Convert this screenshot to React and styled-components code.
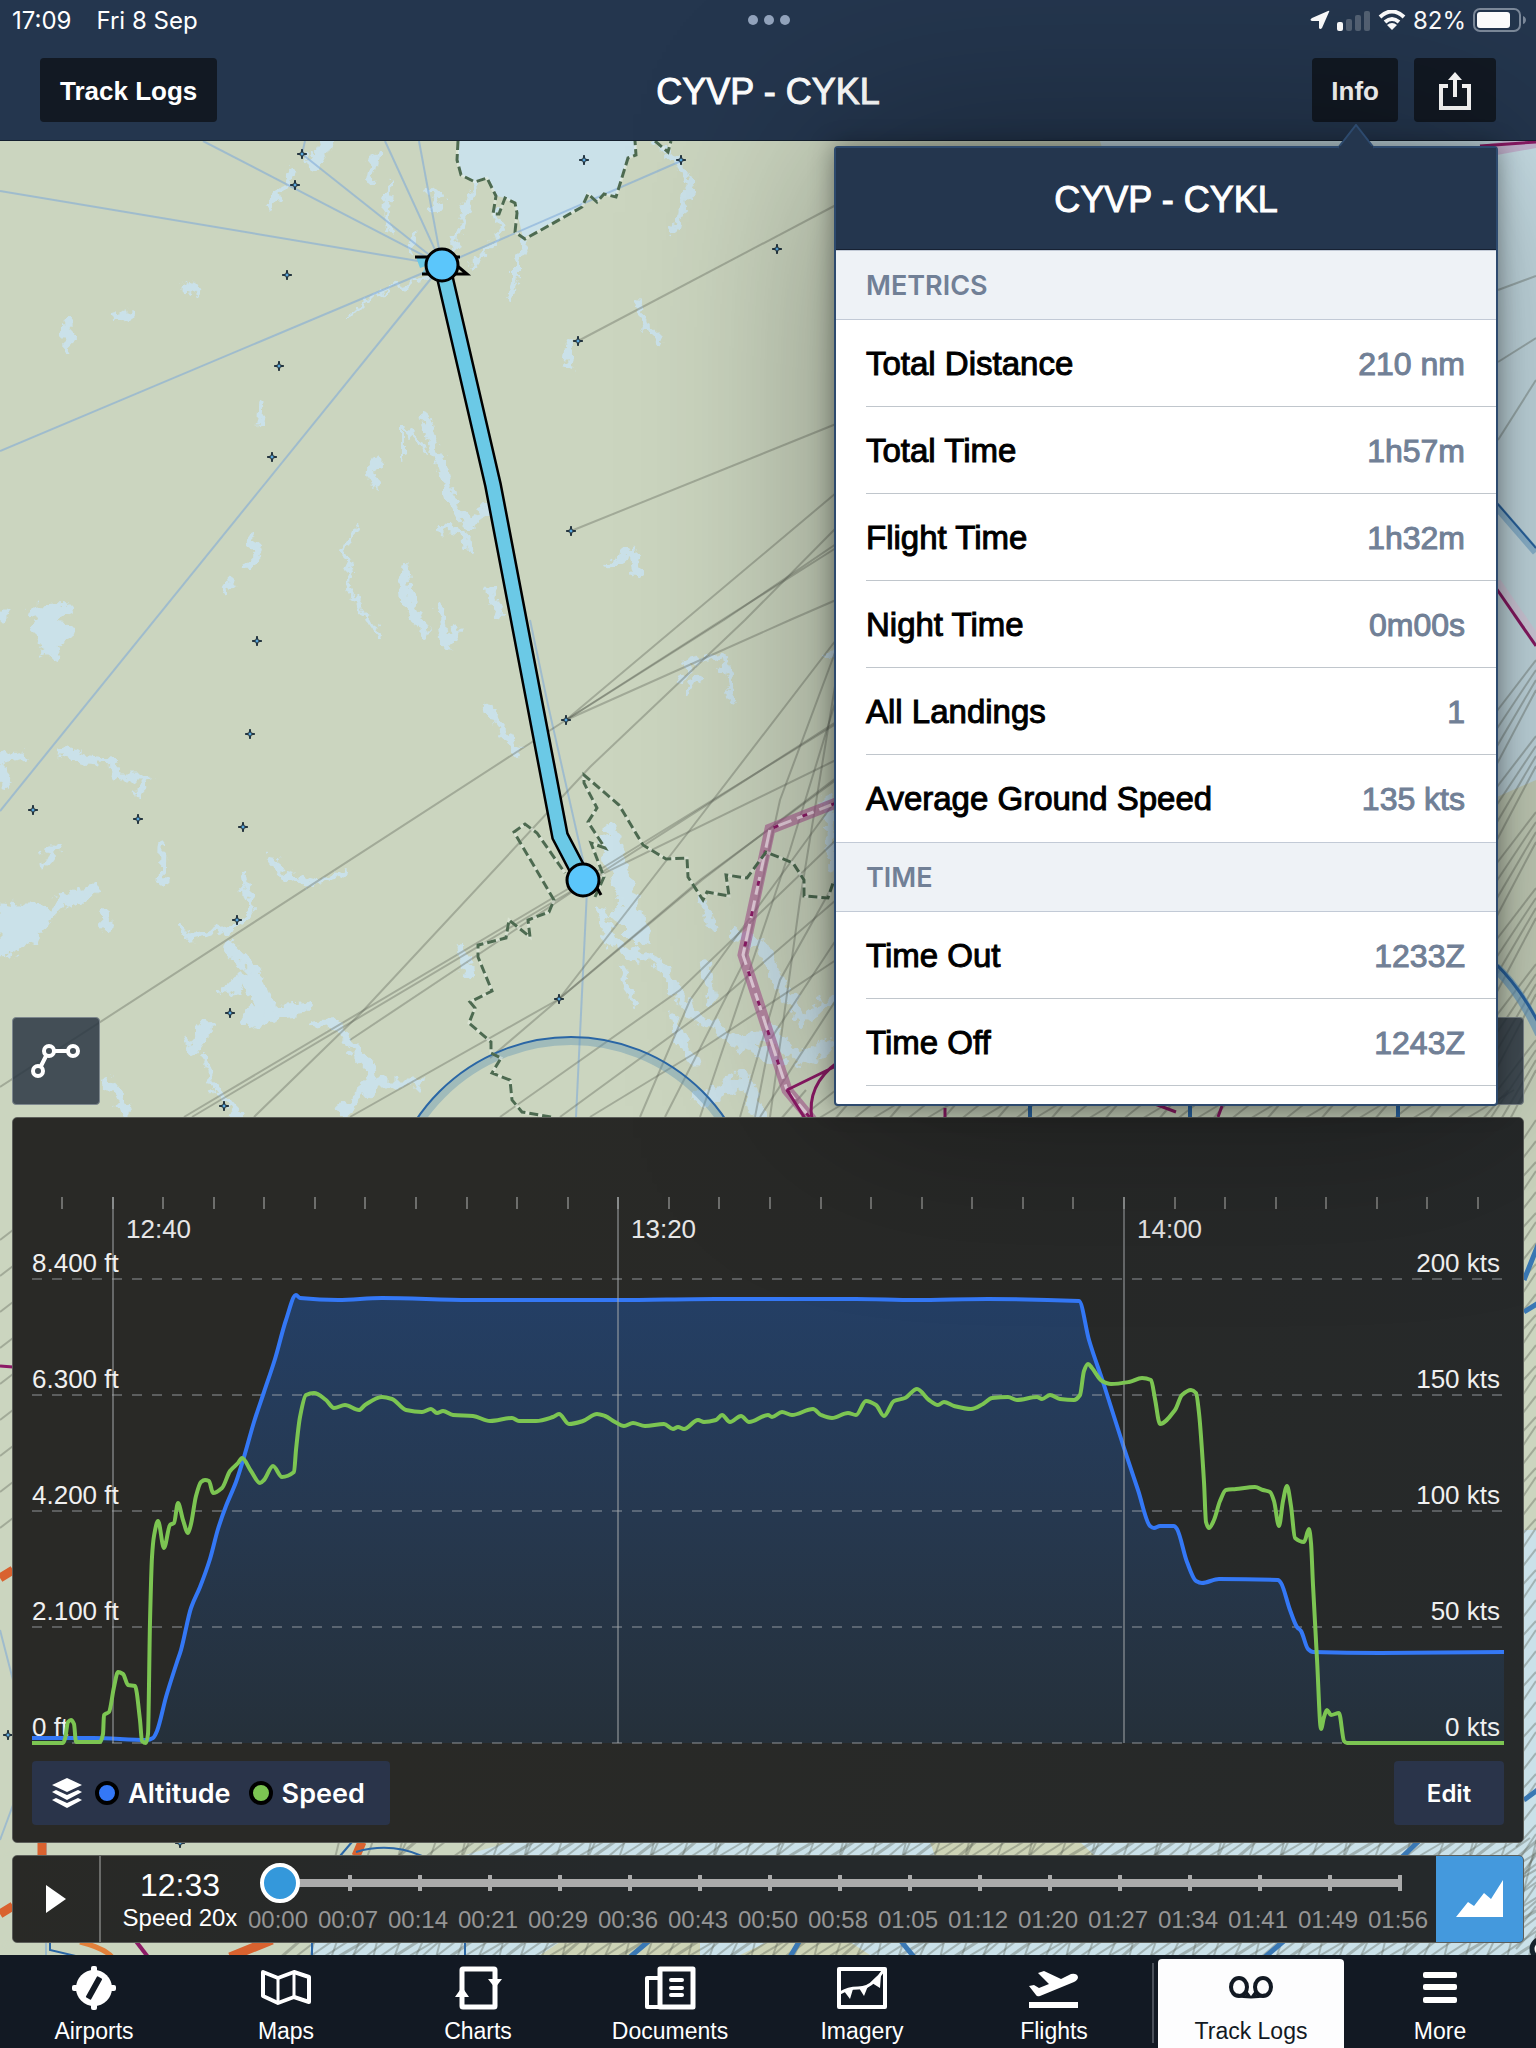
import React, { Component } from "react";
import styled, { createGlobalStyle } from "styled-components";

const GlobalStyle = createGlobalStyle`
  * {
    box-sizing: border-box;
  }

  body {
    margin: 0;
    background-color: #121923;
    font-family: "Liberation Sans", Arial, sans-serif;
  }

  button {
    margin: 0;
    padding: 0;
    border: 0;
    font-family: inherit;
    color: inherit;
    cursor: pointer;
  }
`;

const Page = styled.div`
  display: flex;
  flex-direction: column;

  min-height: 100vh;
`;

/* header */

const Header = styled.header`
  background-color: #24364e;
  border-bottom: 1px solid #14202f;
  color: white;
`;

const StatusBar = styled.div`
  display: grid;
  grid-template-columns: 1fr auto 1fr;
  align-items: center;

  height: 40px;
  padding: 0 10px 0 12px;

  font-family: Inter, sans-serif;
  font-size: 24px;
`;

const StatusGroup = styled.div`
  display: flex;
  align-items: center;
  justify-content: ${props => (props.$end ? "flex-end" : "flex-start")};
  gap: ${props => (props.$end ? "7px" : "25px")};
`;

const Dots = styled.div`
  display: flex;
  gap: 6px;
`;

const Dot = styled.span`
  width: 10px;
  height: 10px;

  border-radius: 50%;
  background-color: #93a4bd;
`;

const NavBar = styled.div`
  display: grid;
  grid-template-columns: 1fr auto 1fr;
  align-items: center;

  padding: 18px 40px;
`;

const NavButtons = styled.div`
  display: flex;
  justify-content: ${props => (props.$end ? "flex-end" : "flex-start")};
  gap: 16px;
`;

const NavButton = styled.button`
  display: flex;
  align-items: center;
  justify-content: center;

  height: 64px;
  padding: ${props => (props.$wide ? "2px 20px 0" : "2px 19px 0")};

  border-radius: 4px;
  background-color: #121923;

  font-size: 26px;
  font-weight: bold;
`;

const Title = styled.h1`
  margin: 0;
  padding-top: 3px;

  font-size: 36px;
  line-height: 40px;
  font-weight: normal;
  -webkit-text-stroke: 1px currentColor;
`;

/* map */

const Stage = styled.main`
  position: relative;

  display: grid;
  flex: 1;
`;

const MapCanvas = styled.svg`
  grid-area: 1 / 1;

  width: 100%;
  height: 100%;
  min-height: 0;
  contain: size;

  background-color: #cbd5bf;
`;

const Overlay = styled.div`
  grid-area: 1 / 1;
  z-index: 1;

  display: flex;
  flex-direction: column;
  justify-content: flex-end;
  gap: 12px;

  padding: 12px;
`;

const MapButtons = styled.div`
  display: flex;
  justify-content: space-between;
`;

const MapButton = styled.button`
  display: flex;
  align-items: center;
  justify-content: center;

  width: 88px;
  height: 88px;

  border: 1px solid #7d878d;
  border-radius: 4px;
  background-color: rgba(41, 52, 66, 0.84);
`;

/* profile chart */

const Panel = styled.section`
  padding: 72px 19px 17px;

  border: 1px solid #5c5e5a;
  border-radius: 5px;
  background: linear-gradient(100deg, #292926 30%, #26292a);
`;

const ChartSvg = styled.svg`
  display: block;

  width: 100%;
  height: auto;
`;

const PanelFooter = styled.div`
  display: flex;
  justify-content: space-between;

  margin-top: 15px;

  font-family: Inter, sans-serif;
  color: white;
`;

const Legend = styled.button`
  display: flex;
  align-items: center;

  height: 64px;
  padding: 0 25px 0 20px;

  border-radius: 4px;
  background-color: #2a344a;

  font-size: 27px;
  font-weight: 600;
`;

const LegendDot = styled.span`
  width: 24px;
  height: 24px;
  margin: 0 9px 0 ${props => props.$gap};

  border: 4px solid black;
  border-radius: 50%;
  background-color: ${props => props.$color};
`;

const EditButton = styled.button`
  width: 110px;
  height: 64px;

  border-radius: 4px;
  background-color: #2a344a;

  font-size: 24px;
  font-weight: 600;
`;

/* playback bar */

const Playback = styled.section`
  display: flex;

  height: 88px;
  overflow: hidden;

  border: 1px solid #5c5e5a;
  border-radius: 5px;
  background: linear-gradient(100deg, #292926, #25292b 40%);
  color: white;
`;

const PlayButton = styled.button`
  display: flex;
  align-items: center;
  justify-content: center;

  width: 88px;

  border-right: 2px solid #6a6b69;
  background: none;
`;

const Clock = styled.div`
  width: 142px;
  padding: 10px 0 0 16px;

  text-align: center;
  white-space: nowrap;
`;

const ClockTime = styled.div`
  font-size: 32px;
  line-height: 38px;
`;

const ClockSpeed = styled.div`
  font-size: 24px;
  line-height: 28px;
`;

const Timeline = styled.div`
  flex: 1;
  min-width: 0;
  padding-right: 3px;
`;

const SliderBox = styled.div`
  display: grid;

  height: 54px;
  padding: 0 13px 0 17px;
`;

const Rail = styled.div`
  grid-area: 1 / 1;
  align-self: center;

  display: flex;
  justify-content: space-between;

  margin: 0 18px;

  background: linear-gradient(#ababab, #ababab) center / 100% 8px no-repeat;
`;

const RailTick = styled.span`
  width: 4px;
  height: 16px;

  background-color: #ababab;
`;

const Slider = styled.input`
  grid-area: 1 / 1;
  z-index: 1;
  appearance: none;

  width: 100%;
  margin: 0;

  background: none;

  &::-webkit-slider-thumb {
    appearance: none;

    width: 40px;
    height: 40px;

    border: 4px solid white;
    border-radius: 50%;
    background-color: #3498db;
  }
`;

const TimeLabels = styled.div`
  display: grid;
  grid-template-columns: repeat(17, minmax(0, 1fr));

  font-size: 24px;
  line-height: 20px;
  text-align: center;
  color: #959595;
`;

const ProfileToggle = styled.button`
  display: flex;
  align-items: center;
  justify-content: center;

  width: 87px;

  background-color: #4499dd;
`;

/* info popover */

const Popover = styled.aside`
  position: absolute;
  top: 5px;
  right: 38px;
  z-index: 2;

  width: 664px;
  height: 960px;

  border: 2px solid #2d4a6e;
  border-radius: 4px;
  background-color: white;
  box-shadow: 0 0 24px rgba(0, 0, 0, 0.4), 0 0 200px rgba(0, 0, 0, 0.36);
`;

const Arrow = styled.svg`
  position: absolute;
  top: -24px;
  right: 121px;
`;

const PopoverHeader = styled.div`
  display: flex;
  align-items: center;
  justify-content: center;

  height: 102px;

  border-bottom: 1px solid #162133;
  background-color: #24364e;
  color: white;
`;

const SectionTitle = styled.h3`
  height: 70px;
  margin: 0;
  padding: 1px 30px 0;

  border-top: 1px solid #c2cad6;
  border-bottom: 1px solid #c2cad6;
  background-color: #eef2f6;

  font-family: Inter, sans-serif;
  font-size: 27px;
  line-height: 68px;
  font-weight: 600;
  color: #718096;
`;

const Rows = styled.dl`
  margin: 0;
  padding-left: 30px;
`;

const Row = styled.div`
  display: flex;
  align-items: center;
  justify-content: space-between;

  height: 87px;
  padding: 2px 31px 0 0;

  border-bottom: 1px solid ${props => (props.$last ? "transparent" : "#c0c6cc")};
`;

const Term = styled.dt`
  font-size: 33px;
  color: black;
  -webkit-text-stroke: 1px currentColor;
`;

const Value = styled.dd`
  margin: 0;

  font-size: 32px;
  color: #718096;
  -webkit-text-stroke: 1px currentColor;
`;

/* tab bar */

const TabBar = styled.nav`
  display: grid;
  grid-template-columns: repeat(8, minmax(0, 1fr));

  height: 93px;

  background-color: #121923;
`;

const Tab = styled.button`
  position: relative;

  display: flex;
  flex-direction: column;
  align-items: center;
  justify-content: space-between;

  padding: ${props => (props.$active ? "7px 0 4px" : "11px 4px 4px 0")};
  margin: ${props => (props.$active ? "4px 0 0 6px" : "0")};

  border-radius: 4px 4px 0 0;
  background-color: ${props => (props.$active ? "#fdfdfe" : "transparent")};

  font-size: 23px;
  line-height: 26px;
  color: ${props => (props.$active ? "#121923" : "white")};

  &:last-child {
    padding-right: 0;
  }

  &::before {
    content: "";
    display: ${props => (props.$active ? "block" : "none")};
    position: absolute;
    top: 4px;
    bottom: 5px;
    left: -6px;
    width: 2px;
    background-color: #4a505a;
  }
`;

const METRICS = [
  ["Total Distance", "210 nm"],
  ["Total Time", "1h57m"],
  ["Flight Time", "1h32m"],
  ["Night Time", "0m00s"],
  ["All Landings", "1"],
  ["Average Ground Speed", "135 kts"]
];

const TIMES = [["Time Out", "1233Z"], ["Time Off", "1243Z"]];

const TIMELINE = [
  "00:00", "00:07", "00:14", "00:21", "00:29", "00:36", "00:43", "00:50", "00:58",
  "01:05", "01:12", "01:20", "01:27", "01:34", "01:41", "01:49", "01:56"
];

const ALTITUDE =
  "0,548 61,548 115,550 121,548 125,541 134,507 137,497 145,472 149,460 159,418 168,397 178,369 186,339 194,316 204,292 212,267 222,232 232,202 243,169 254,130 264,105 268,108 306,110 350,108 438,110 586,110 683,109 736,109 824,109 883,110 956,109 1047,111 1057,150 1072,195 1092,258 1106,300 1118,336 1122,338 1128,336 1142,336 1145,339 1155,372 1164,391 1170,393 1187,389 1246,390 1249,393 1258,420 1265,437 1269,441 1276,459 1281,462 1348,463 1472,462";

const SPEED =
  "0,553 31,553 33,549 36,532 39,530 42,534 44,552 68,552 71,544 72,525 77,522 82,497 86,482 91,484 96,495 103,496 108,530 110,551 114,553 116,544 118,432 120,367 122,346 126,331 132,358 138,335 142,333 146,313 151,330 156,343 159,334 164,306 169,292 173,290 177,291 181,303 190,298 198,281 206,273 210,268 219,281 228,293 232,290 241,276 250,287 262,282 264,260 268,227 274,205 282,203 294,210 302,218 313,215 327,220 333,215 350,207 360,209 374,220 390,222 399,219 405,223 411,221 421,225 441,226 458,231 480,228 487,231 504,231 521,227 527,224 537,234 551,231 565,224 573,226 583,232 592,236 601,233 613,236 632,234 641,239 646,237 652,239 666,230 672,232 684,230 690,225 698,232 709,226 717,232 736,225 740,227 750,222 760,225 781,219 789,225 800,228 816,223 824,225 834,211 844,215 852,226 862,211 873,208 885,199 897,210 906,215 912,212 922,216 939,219 951,214 960,208 976,207 985,210 1005,207 1010,209 1018,205 1028,209 1042,210 1048,205 1052,181 1056,174 1060,178 1070,191 1079,194 1097,192 1110,188 1119,190 1123,209 1128,234 1143,220 1150,205 1159,200 1164,203 1167,223 1172,292 1174,332 1177,338 1182,330 1188,311 1194,300 1204,299 1223,297 1231,300 1238,302 1242,311 1247,336 1251,311 1255,296 1259,316 1263,348 1272,352 1277,339 1279,353 1281,395 1285,469 1289,539 1292,527 1295,520 1299,525 1307,523 1312,551 1315,553 1472,553";

const GRID = [
  { y: 89, ft: "8.400 ft", kts: "200 kts" },
  { y: 205, ft: "6.300 ft", kts: "150 kts" },
  { y: 321, ft: "4.200 ft", kts: "100 kts" },
  { y: 437, ft: "2.100 ft", kts: "50 kts" },
  { y: 553, ft: "0 ft", kts: "0 kts" }
];

const HOURS = [{ x: 81, label: "12:40" }, { x: 586, label: "13:20" }, { x: 1092, label: "14:00" }];

// monotone cubic through the samples, so flat parts stay flat
const smooth = samples => {
  const pts = samples.split(" ").map(pair => pair.split(",").map(Number));
  const slopes = pts.map(([x, y], i) => {
    if (i === 0 || i === pts.length - 1) return 0;
    const before = (y - pts[i - 1][1]) / (x - pts[i - 1][0]);
    const after = (pts[i + 1][1] - y) / (pts[i + 1][0] - x);
    return before * after <= 0 ? 0 : (2 * before * after) / (before + after);
  });

  return pts.reduce((path, [x, y], i) => {
    if (i === 0) return `M${x} ${y}`;
    const [px, py] = pts[i - 1];
    const third = (x - px) / 3;
    return `${path}C${px + third} ${py + slopes[i - 1] * third} ${x - third} ${y - slopes[i] * third} ${x} ${y}`;
  }, "");
};

const Chart = () => (
  <ChartSvg viewBox="0 0 1472 556" role="img" aria-label="Altitude and speed">
    <defs>
      <linearGradient id="altitudeFill" x1="0" y1="0" x2="0" y2="1">
        <stop offset="0" stopColor="#243f65" />
        <stop offset="0.5" stopColor="#26384f" />
        <stop offset="1" stopColor="#25303a" />
      </linearGradient>
    </defs>
    <path d={`${smooth(ALTITUDE)}V553H0Z`} fill="url(#altitudeFill)" />
    {Array.from({ length: 29 }, (_, i) => (
      <path key={i} d={`M${30 + Math.round(i * 50.57)} 7v12`} stroke="#6d6e6c" strokeWidth="2" />
    ))}
    {GRID.map(({ y }) => (
      <path key={y} d={`M0 ${y}H1472`} stroke="#aab0b4" strokeOpacity="0.4" strokeWidth="2" strokeDasharray="10 10" />
    ))}
    <path d={smooth(ALTITUDE)} fill="none" stroke="#3478f6" strokeWidth="4" strokeLinejoin="round" />
    {HOURS.map(({ x, label }) => (
      <g key={x}>
        <path d={`M${x} 7V553`} stroke="#a4a8aa" strokeOpacity="0.5" strokeWidth="2" />
        <text x={x + 13} y="48" fontSize="26" fill="#e6e6e6">
          {label}
        </text>
      </g>
    ))}
    {GRID.map(({ y, ft, kts }) => (
      <g key={y} fontSize="26" fill="#f0f0f0">
        <text x="0" y={y - 7}>
          {ft}
        </text>
        <text x="1468" y={y - 7} textAnchor="end">
          {kts}
        </text>
      </g>
    ))}
    <path d={smooth(SPEED)} fill="none" stroke="#7cc552" strokeWidth="4" strokeLinejoin="round" />
  </ChartSvg>
);

// [width, points]
const LAKES = [
  [8, "375,158 370,180"],
  [5, "391,180 386,215 390,230"],
  [6, "292,168 282,190 270,205"],
  [13, "327,143 313,163"],
  [6, "428,188 440,198 434,212"],
  [7, "415,238 412,250"],
  [5, "474,185 466,213 453,250"],
  [5, "496,210 503,227 490,247 471,270"],
  [6, "525,240 517,263 517,280 509,298"],
  [3, "429,278 375,293 348,320"],
  [6, "655,141 670,155 680,165 685,180 692,183 686,195 683,215 675,228"],
  [6, "637,303 646,327 662,342"],
  [8, "569,347 567,365"],
  [9, "185,287 200,292"],
  [8, "115,318 131,313"],
  [8, "69,323 67,347"],
  [5, "262,407 260,423"],
  [10, "426,417 431,440 442,467 455,510 469,523 487,510"],
  [4, "404,427 420,442 424,452"],
  [4, "404,427 404,457"],
  [9, "380,460 370,473 375,485"],
  [6, "439,528 463,532 469,547"],
  [4, "356,525 343,553 353,573 348,590 380,637"],
  [8, "252,538 257,555 246,567"],
  [7, "233,582 225,593"],
  [12, "404,573 407,600 423,630"],
  [9, "439,607 445,645 456,630"],
  [8, "490,590 498,613"],
  [8, "611,565 632,550 637,573"],
  [16, "36,612 62,610 40,628 66,632 48,640 52,652"],
  [7, "0,618 6,612"],
  [8, "485,705 503,730 517,750"],
  [7, "680,683 691,663 723,655 734,703"],
  [6, "700,676 690,690"],
  [7, "64,752 86,760 112,762 118,777 150,777 137,793"],
  [9, "0,760 22,756"],
  [12, "0,770 5,782"],
  [9, "54,850 46,862"],
  [7, "163,850 162,883"],
  [10, "104,913 106,928"],
  [6, "270,858 284,875 316,885 348,872"],
  [6, "244,877 252,913 236,927 188,938 182,927"],
  [12, "230,947 245,962 257,973 225,990"],
  [20, "252,980 268,1013 250,1020"],
  [12, "268,1010 305,1007"],
  [9, "315,1025 337,1023 350,1045 370,1067 372,1080"],
  [14, "206,1028 193,1048"],
  [6, "204,1057 214,1087 241,1117"],
  [10, "107,1082 118,1095 126,1112"],
  [10, "461,950 469,975"],
  [9, "611,827 621,853 625,870"],
  [10, "600,913 612,940 632,953 659,963 680,995 691,1013 739,1043 780,1060"],
  [8, "702,900 712,923"],
  [6, "621,967 635,1007"],
  [9, "672,1017 682,1045 696,1063"],
  [10, "734,933 761,943 779,983 803,1020 830,1000"],
  [9, "705,960 712,1000"],
  [9, "343,1110 375,1083 418,1083"],
  [12, "740,1045 770,1030 800,1060 830,1045"],
  [14, "700,1100 745,1080 760,1117"],
  [5, "825,655 836,653"],
  [9, "828,800 832,870"]
];

const AIRWAYS = [
  "0,191", "203,141", "302,154", "385,141", "419,141", "681,161", "0,451", "0,811"
];

const ROUTES = [
  "578,341 836,205",
  "571,531 836,424",
  "0,1087 566,720 836,493",
  "566,720 722,620 836,548",
  "566,720 724,620 836,544",
  "566,720 790,620 836,600",
  "836,528 745,620 590,767 361,1013 254,1117",
  "836,724 583,880 184,1117",
  "836,722 590,880 192,1117",
  "836,760 590,880 350,1040",
  "836,640 690,830 559,999 490,1058",
  "836,780 700,880 559,999 350,1117",
  "836,778 702,880 559,999",
  "836,840 680,990 500,1117",
  "836,900 720,1000 560,1117",
  "836,960 700,1050 590,1117",
  "836,650 780,800 745,960 665,1117",
  "836,700 790,850 700,1117",
  "836,880 780,980 740,1117",
  "836,1000 760,1117",
  "836,940 770,1040 755,1117",
  "836,680 800,900 770,1117",
  "836,800 690,1000 640,1117",
  "1498,290 1536,276",
  "1498,362 1536,338",
  "1498,440 1536,380"
];

const COAST = [
  "458,141 457,160 461,175 475,182 487,178 496,196 493,214 499,214 505,198 515,203 517,213 515,232 525,239 582,207 588,194 597,202 604,194 616,197 628,158 636,155 635,141",
  "551,1117 522,1112 512,1100 510,1080 492,1073 501,1058 491,1053 491,1042 469,1023 475,1008 470,1002 492,991 478,957 478,945 506,938 509,920 530,937 528,920 549,912 554,900 514,832 525,824 537,833 565,873",
  "595,897 604,877 591,843 605,848 588,822 597,808 584,783 584,775 619,805 643,845 666,859 687,858 688,877 703,900 707,892 729,896 726,875 747,878 766,852 793,863 804,880 804,896 828,898 833,883",
  "655,141 668,152 671,141"
];

const STARS = [
  [302, 154], [295, 185], [584, 160], [681, 160], [287, 275], [279, 366], [272, 457],
  [257, 641], [250, 734], [243, 827], [33, 810], [138, 819], [237, 920], [230, 1013],
  [224, 1106], [777, 249], [578, 341], [571, 531], [566, 720], [559, 999], [8, 1735],
  [180, 1843]
];

const TRACK = "442,265 493,485 560,836 583,880";
const AIRSPACE = "836,803 770,829 743,955 787,1090 812,1120";

const Chartlet = () => (
  <MapCanvas viewBox="0 141 1536 1814" preserveAspectRatio="xMidYMid slice" aria-label="Map">
    <defs>
      <filter id="shore" x="0" y="0" width="1536" height="2048" filterUnits="userSpaceOnUse">
        <feTurbulence type="fractalNoise" baseFrequency="0.09" numOctaves="3" seed="4" />
        <feDisplacementMap in="SourceGraphic" scale="18" xChannelSelector="R" yChannelSelector="G" />
      </filter>
    </defs>

    {/* water */}
    <g fill="#cae1e9" stroke="none">
      <path d="M1100 141H1536V780L1490 800H1300Z" />
      <path d="M510 1842H1536V1955H310V1900Z" />
      <path d="M1520 1530H1536V1955H1520Z" />
    </g>
    <path d="M930 1842H1080L1110 1870H940ZM768 1942H850L870 1955H740ZM560 1942H700V1955H540Z" fill="#cdd3b6" />
    <g filter="url(#shore)" fill="none" stroke="#cae1e9" strokeLinejoin="round" strokeLinecap="round">
      {LAKES.map(([width, points]) => (
        <polyline key={points} points={points} strokeWidth={width} />
      ))}
      <path d="M0 903L22 905 48 908 80 888 97 886 97 894 62 908 44 925 32 942 12 955 0 956Z" fill="#cae1e9" strokeWidth="3" />
      <path
        d="M600 840L612 838 625 870 640 905 652 940 640 948 622 930 608 915 622 905Z"
        fill="#cae1e9"
        strokeWidth="1"
      />
    </g>
    <path
      d="M458 130V160L461 175 475 182 487 178 497 196 505 198 515 203 523 238 582 207 588 194 597 202 604 194 616 197 628 158 636 155V130Z"
      fill="#cae1e9"
    />

    {/* airways and routes */}
    <g stroke="#7ba7d8" strokeOpacity="0.55" strokeWidth="2" fill="none">
      {AIRWAYS.map(end => (
        <polyline key={end} points={`442,265 ${end}`} />
      ))}
      <path d="M302 154L305 141M530 620L548 705 583 860 587 890 576 1117M0 1630L13 1680M0 1840L13 1805M46 1842V1855M46 1942V1955" />
    </g>
    <g stroke="#565c50" strokeOpacity="0.35" strokeWidth="2" fill="none">
      {ROUTES.map(points => (
        <polyline key={points} points={points} />
      ))}
      {Array.from({ length: 24 }, (_, i) => (
        <path key={i} d={`M1490 ${720 + i * 19}L1536 ${660 + i * 19 - (i % 4) * 9}`} />
      ))}
      {Array.from({ length: 48 }, (_, i) => (
        <path key={i} d={`M1516 ${1150 + i * 17}L1536 ${1120 + i * 17 + (i % 3) * 4}`} />
      ))}
      {Array.from({ length: 9 }, (_, i) => (
        <path key={i} d={`M0 ${1240 + i * 36}L13 ${1230 + i * 36}`} />
      ))}
      {Array.from({ length: 90 }, (_, i) => (
        <path key={i} d={`M${280 + i * 14} 1958L${420 + i * 14 + (i % 5) * 16} 1838`} strokeWidth={i % 4 ? 2 : 3} />
      ))}
      {Array.from({ length: 60 }, (_, i) => (
        <path key={i} d={`M${310 + i * 21} 1958L${340 + i * 21 + (i % 3) * 13} 1838`} />
      ))}
      {Array.from({ length: 40 }, (_, i) => (
        <path key={i} d={`M${780 + i * 18} 1120L${806 + i * 18 + (i % 3) * 12} 1090`} />
      ))}
    </g>

    {/* airspace */}
    <g fill="none">
      <circle cx="571" cy="1223" r="182" stroke="#5f94b5" strokeOpacity="0.4" strokeWidth="8" />
      <circle cx="571" cy="1223" r="186" stroke="#2a66a5" strokeWidth="2" />
      <path d="M1496 506L1536 552" stroke="#6ca3cc" strokeOpacity="0.6" strokeWidth="8" />
      <path d="M1496 502L1536 548" stroke="#2a66a5" strokeWidth="2" />
      <path d="M1496 968Q1520 990 1540 1034" stroke="#5c97c8" strokeOpacity="0.6" strokeWidth="10" />
      <path d="M1496 964Q1522 990 1540 1026" stroke="#2a66a5" strokeWidth="3" />
      <path d="M1496 582L1536 640" stroke="#e3cfe2" strokeOpacity="0.7" strokeWidth="10" />
      <path d="M1496 588L1536 646" stroke="#8c1a66" strokeWidth="3" />
      <path d="M1480 146L1536 134V148L1480 158Z" fill="#c58fc0" fillOpacity="0.5" />
      <path d="M1480 146L1536 142" stroke="#8c1a66" strokeWidth="3" />
      <polyline points={AIRSPACE} stroke="#a8558f" strokeOpacity="0.6" strokeWidth="11" />
      <polyline points={AIRSPACE} stroke="#e6cfdd" strokeWidth="3" strokeDasharray="18 6" />
      <polyline points={AIRSPACE} stroke="#8c1a66" strokeWidth="3" strokeDasharray="5 26" />
      <path d="M787 1090L838 1065M787 1090L806 1120M838 1062Q806 1085 812 1120" stroke="#8c1a66" strokeWidth="3" />
      <path d="M945 1108V1117M1155 1104L1176 1112M1222 1106L1218 1117" stroke="#8c1a66" strokeWidth="3" />
      <path d="M1030 1100V1117M1190 1106V1117M1398 1100V1117" stroke="#2a66a5" strokeWidth="4" />
      <path d="M0 1366L13 1367" stroke="#8c1a66" strokeWidth="3" />
      <path d="M0 1578L13 1570M0 1914L13 1906M42 1842V1856M230 1957L272 1940M356 1856L362 1842" stroke="#d9622f" strokeWidth="9" />
      <path d="M80 1942Q104 1948 112 1957" stroke="#e2803a" strokeWidth="5" />
      <path d="M135 1940L148 1957" stroke="#8c1a66" strokeWidth="4" />
      <path d="M340 1856L352 1842M356 1852Q390 1842 422 1856M50 1942V1950L80 1957M312 1942V1957M465 1942V1957" stroke="#2a66a5" strokeWidth="2" />
      <path d="M630 1957L650 1940M1402 1857L1420 1840M1265 1957L1285 1940M900 1940L914 1957M790 1957L800 1940M1524 1280L1540 1240M1524 1312L1540 1302M1524 1800L1540 1788" stroke="#3a78b4" strokeWidth="5" />
      <circle cx="1542" cy="1949" r="10" stroke="#16242e" strokeWidth="5" fill="white" />
    </g>

    {COAST.map(points => (
      <g key={points} fill="none" strokeWidth="3">
        <polyline points={points} stroke="#e8efe6" strokeOpacity="0.5" />
        <polyline points={points} stroke="#4d6a50" strokeDasharray="9 4" />
      </g>
    ))}
    {STARS.map(([x, y]) => (
      <path
        key={`${x}-${y}`}
        d={`M${x} ${y - 5}l1 4 4 1-4 1-1 4-1-4-4-1 4-1z`}
        fill="#5aa9df"
        stroke="#16242e"
        strokeWidth="1"
      />
    ))}

    {/* flown track */}
    <path d="M416 257H428L424 274H422L426 266 420 268Z" fill="#6bc9e6" />
    <path d="M415 257H434M422 274H434M450 257H460M455 264L467 274H454Z" fill="none" stroke="black" strokeWidth="3" />
    <path d="M596 886L601 895" stroke="black" strokeWidth="3" />
    <polyline points={TRACK} fill="none" stroke="black" strokeWidth="18" />
    <polyline points={TRACK} fill="none" stroke="#6bc9e6" strokeWidth="13" />
    <circle cx="442" cy="265" r="16" fill="#5bc6fb" stroke="black" strokeWidth="3" />
    <circle cx="583" cy="880" r="16" fill="#5bc6fb" stroke="black" strokeWidth="3" />
  </MapCanvas>
);

const StatusIcons = () => (
  <>
    <svg width="20" height="20" viewBox="0 0 20 20" fill="white">
      <path d="M18 1Q20 0 19 2L12 18Q10 20 9 18V11H2Q-1 10 2 8Z" />
    </svg>
    <svg width="34" height="22" viewBox="0 0 34 22" fill="white">
      <rect x="0" y="13" width="6" height="9" rx="2" />
      <rect x="9" y="10" width="6" height="12" rx="2" opacity="0.22" />
      <rect x="18" y="6" width="6" height="16" rx="2" opacity="0.22" />
      <rect x="27" y="2" width="6" height="20" rx="2" opacity="0.22" />
    </svg>
    <svg width="28" height="20" viewBox="0 0 28 20" fill="none" stroke="white" strokeWidth="4">
      <path d="M2 7Q14 -4 26 7" />
      <path d="M7 12Q14 6 21 12" />
      <path d="M14 20L9 15Q14 11 19 15Z" fill="white" stroke="none" />
    </svg>
  </>
);

const Battery = () => (
  <svg width="53" height="24" viewBox="0 0 53 24">
    <rect x="1" y="1" width="46" height="22" rx="6" fill="none" stroke="#7d8a9b" strokeWidth="2" />
    <rect x="4" y="4" width="33" height="16" rx="3" fill="white" />
    <path d="M50 8Q53 9 53 12T50 16Z" fill="#7d8a9b" />
  </svg>
);

const ShareIcon = () => (
  <svg width="44" height="44" viewBox="0 0 44 44" fill="none" stroke="white" strokeWidth="4">
    <path d="M15 17H8V39H36V17H29" />
    <path d="M22 8V28" />
    <path d="M22 3L29 11H15Z" fill="white" stroke="none" />
  </svg>
);

const LayersIcon = () => (
  <svg width="30" height="32" viewBox="0 0 30 32" fill="white">
    <path d="M15 1L30 8 15 15 0 8Z" />
    <path d="M0 15L4 13 15 18 26 13 30 15 15 23Z" />
    <path d="M0 23L4 21 15 26 26 21 30 23 15 31Z" />
  </svg>
);

const TAB_ICONS = {
  Airports: (
    <svg width="44" height="44" viewBox="0 0 44 44">
      <rect x="19" y="0" width="6" height="44" rx="2" fill="white" />
      <rect x="0" y="19" width="44" height="6" rx="2" fill="white" />
      <circle cx="22" cy="22" r="18" fill="white" />
      <rect x="19" y="10" width="6" height="24" rx="1" fill="#121923" transform="rotate(29 22 22)" />
    </svg>
  ),
  Maps: (
    <svg width="52" height="44" viewBox="0 0 52 44" fill="none" stroke="white" strokeWidth="4" strokeLinejoin="round">
      <path d="M3 6L18 12 34 6 49 11V36L34 31 18 37 3 30Z" />
      <path d="M18 12V37M34 6V31" strokeWidth="3" />
    </svg>
  ),
  Charts: (
    <svg width="48" height="44" viewBox="0 0 48 44" fill="white">
      <rect x="8" y="3" width="33" height="38" rx="1" fill="none" stroke="white" strokeWidth="5" />
      <path d="M34 13H48L41 22ZM1 31H15L8 21Z" />
    </svg>
  ),
  Documents: (
    <svg width="52" height="44" viewBox="0 0 52 44" fill="none" stroke="white" strokeWidth="4" strokeLinejoin="round">
      <path d="M16 3H49V41H16Z" strokeWidth="5" />
      <path d="M16 12H3V41H16" />
      <path d="M27 14H38M27 22H38M27 29H38" strokeLinecap="round" />
    </svg>
  ),
  Imagery: (
    <svg width="52" height="44" viewBox="0 0 52 44" fill="none" stroke="white" strokeWidth="4" strokeLinejoin="round">
      <path d="M3 3H49V41H3Z" />
      <path d="M4 27Q12 22 22 22T38 15Q44 10 47 5" strokeWidth="3" />
      <path d="M8 25L14 33 17 23ZM23 22L28 30 32 20ZM36 17L44 22 45 9Z" fill="white" stroke="none" />
    </svg>
  ),
  Flights: (
    <svg width="50" height="44" viewBox="0 0 50 44" fill="white">
      <path d="M0 20L5 19 10 22 20 18 9 7 15 5 32 13 42 8Q48 7 49 11 49 14 45 16L11 30Q8 31 7 29Z" />
      <rect x="0" y="36" width="49" height="6" />
    </svg>
  ),
  "Track Logs": (
    <svg width="44" height="44" viewBox="0 0 44 44" fill="none" stroke="#121923" strokeWidth="4">
      <ellipse cx="10" cy="21" rx="8" ry="9" />
      <ellipse cx="34" cy="21" rx="8" ry="9" />
      <path d="M8 29Q14 31 22 31T36 29M17 26L20 30M27 26L24 30" strokeWidth="3" />
    </svg>
  ),
  More: (
    <svg width="44" height="44" viewBox="0 0 44 44" fill="white">
      <rect x="5" y="6" width="34" height="6" rx="2" />
      <rect x="5" y="18" width="34" height="6" rx="2" />
      <rect x="5" y="31" width="34" height="6" rx="2" />
    </svg>
  )
};

const InfoRows = ({ rows, ruled }) => (
  <Rows>
    {rows.map(([term, value], i) => (
      <Row key={term} $last={!ruled && i === rows.length - 1}>
        <Term>{term}</Term>
        <Value>{value}</Value>
      </Row>
    ))}
  </Rows>
);

class App extends Component {
  constructor(props) {
    super(props);
    this.state = { position: 0, tab: "Track Logs", infoOpen: true };
  }

  onSeek = e => {
    this.setState({ position: Number(e.target.value) });
  };

  toggleInfo = () => {
    this.setState(state => ({ infoOpen: !state.infoOpen }));
  };

  render() {
    const { position, tab, infoOpen } = this.state;

    return (
      <Page>
        <GlobalStyle />
        <Header>
          <StatusBar>
            <StatusGroup>
              <span>17:09</span>
              <span>Fri 8 Sep</span>
            </StatusGroup>
            <Dots>
              <Dot />
              <Dot />
              <Dot />
            </Dots>
            <StatusGroup $end>
              <StatusIcons />
              <span>82%</span>
              <Battery />
            </StatusGroup>
          </StatusBar>
          <NavBar>
            <NavButtons>
              <NavButton $wide>Track Logs</NavButton>
            </NavButtons>
            <Title>CYVP - CYKL</Title>
            <NavButtons $end>
              <NavButton onClick={this.toggleInfo}>Info</NavButton>
              <NavButton aria-label="Share">
                <ShareIcon />
              </NavButton>
            </NavButtons>
          </NavBar>
        </Header>

        <Stage>
          <Chartlet />
          <Overlay>
            <MapButtons>
              <MapButton aria-label="Route">
                <svg width="50" height="36" viewBox="0 0 50 36" fill="none" stroke="white" strokeWidth="4">
                  <circle cx="7" cy="28" r="5" />
                  <circle cx="18" cy="8" r="5" />
                  <circle cx="42" cy="8" r="5" />
                  <path d="M10 23L15 13M24 8H36" />
                </svg>
              </MapButton>
              <MapButton aria-label="Map options" />
            </MapButtons>

            <Panel>
              <Chart />
              <PanelFooter>
                <Legend>
                  <LayersIcon />
                  <LegendDot $color="#3478f6" $gap="13px" />
                  Altitude
                  <LegendDot $color="#7cc552" $gap="18px" />
                  Speed
                </Legend>
                <EditButton>Edit</EditButton>
              </PanelFooter>
            </Panel>

            <Playback>
              <PlayButton aria-label="Play">
                <svg width="20" height="28" viewBox="0 0 20 28" fill="white">
                  <path d="M0 0L20 14 0 28Z" />
                </svg>
              </PlayButton>
              <Clock>
                <ClockTime>12:33</ClockTime>
                <ClockSpeed>Speed 20x</ClockSpeed>
              </Clock>
              <Timeline>
                <SliderBox>
                  <Rail>
                    {TIMELINE.map(time => (
                      <RailTick key={time} />
                    ))}
                  </Rail>
                  <Slider
                    type="range"
                    min="0"
                    max="116"
                    value={position}
                    onChange={this.onSeek}
                    aria-label="Playback position"
                  />
                </SliderBox>
                <TimeLabels>
                  {TIMELINE.map(time => (
                    <span key={time}>{time}</span>
                  ))}
                </TimeLabels>
              </Timeline>
              <ProfileToggle aria-label="Toggle profile">
                <svg width="48" height="38" viewBox="0 0 48 38" fill="white">
                  <path d="M0 37L12 22 18 26 28 13 35 19 47 0V37Z" />
                </svg>
              </ProfileToggle>
            </Playback>
          </Overlay>

          {infoOpen && (
            <Popover>
              <Arrow width="38" height="26" viewBox="0 0 38 26">
                <path d="M1 24L19 1 37 24" fill="#24364e" stroke="#2d4a6e" strokeWidth="2" />
                <rect x="2" y="22" width="34" height="4" fill="#24364e" />
              </Arrow>
              <PopoverHeader>
                <Title as="h2">CYVP - CYKL</Title>
              </PopoverHeader>
              <SectionTitle>METRICS</SectionTitle>
              <InfoRows rows={METRICS} />
              <SectionTitle>TIME</SectionTitle>
              <InfoRows rows={TIMES} ruled />
            </Popover>
          )}
        </Stage>

        <TabBar>
          {Object.keys(TAB_ICONS).map(name => (
            <Tab key={name} $active={name === tab}>
              {TAB_ICONS[name]}
              {name}
            </Tab>
          ))}
        </TabBar>
      </Page>
    );
  }
}

export default App;
